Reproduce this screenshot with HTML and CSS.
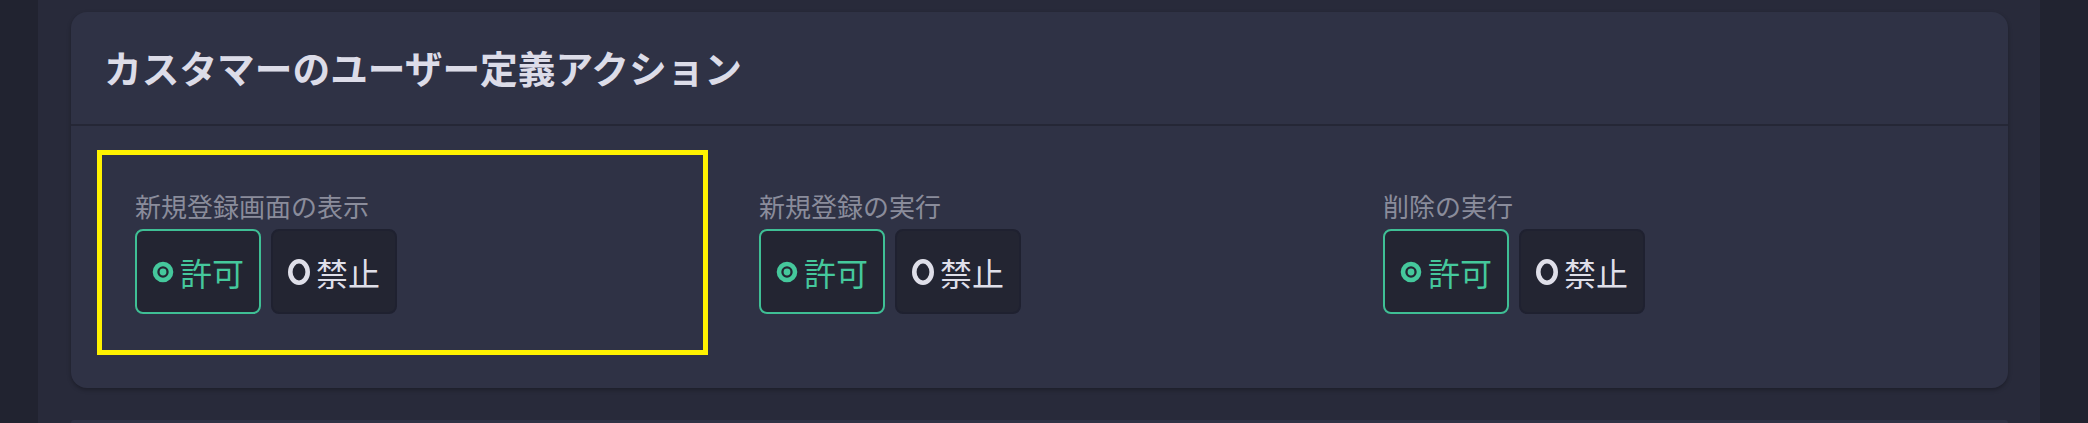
FILE: index.html
```html
<!DOCTYPE html>
<html lang="ja">
<head>
<meta charset="utf-8">
<title>カスタマーのユーザー定義アクション</title>
<link rel="stylesheet" href="styles.css">
</head>
<body>
<div class="app">
  <aside class="rail rail-left"></aside>
  <main class="main">
    <section class="card">
      <header class="card-header">
        <h2 class="card-title">カスタマーのユーザー定義アクション</h2>
      </header>
      <div class="card-body">
        <div class="actions">
          <div class="action action-highlight">
            <div class="action-label">新規登録画面の表示</div>
            <div class="choice-group">
              <button class="choice choice-on"><svg class="radio" viewBox="0 0 22 26"><circle cx="11" cy="13" r="8" fill="none" stroke="currentColor" stroke-width="4.6"/><circle cx="11" cy="13" r="3.4" fill="currentColor"/></svg><span>許可</span></button>
              <button class="choice choice-off"><svg class="radio" viewBox="0 0 22 26"><ellipse cx="11" cy="13" rx="8.7" ry="10.7" fill="none" stroke="currentColor" stroke-width="4.6"/></svg><span>禁止</span></button>
            </div>
          </div>
          <div class="action">
            <div class="action-label">新規登録の実行</div>
            <div class="choice-group">
              <button class="choice choice-on"><svg class="radio" viewBox="0 0 22 26"><circle cx="11" cy="13" r="8" fill="none" stroke="currentColor" stroke-width="4.6"/><circle cx="11" cy="13" r="3.4" fill="currentColor"/></svg><span>許可</span></button>
              <button class="choice choice-off"><svg class="radio" viewBox="0 0 22 26"><ellipse cx="11" cy="13" rx="8.7" ry="10.7" fill="none" stroke="currentColor" stroke-width="4.6"/></svg><span>禁止</span></button>
            </div>
          </div>
          <div class="action">
            <div class="action-label">削除の実行</div>
            <div class="choice-group">
              <button class="choice choice-on"><svg class="radio" viewBox="0 0 22 26"><circle cx="11" cy="13" r="8" fill="none" stroke="currentColor" stroke-width="4.6"/><circle cx="11" cy="13" r="3.4" fill="currentColor"/></svg><span>許可</span></button>
              <button class="choice choice-off"><svg class="radio" viewBox="0 0 22 26"><ellipse cx="11" cy="13" rx="8.7" ry="10.7" fill="none" stroke="currentColor" stroke-width="4.6"/></svg><span>禁止</span></button>
            </div>
          </div>
        </div>
      </div>
    </section>
    <section class="card card-next"></section>
  </main>
  <aside class="rail rail-right"></aside>
</div>
</body>
</html>
```
FILE: styles.css
```css
* { box-sizing: border-box; }
html, body {
  margin: 0;
  height: 100%;
  overflow: hidden;
  background: #282a3a;
  font-family: "Noto Sans CJK JP", "Noto Sans", sans-serif;
}
.app {
  display: flex;
  height: 423px;
  overflow: hidden;
}
.rail {
  background: #212330;
  flex: none;
}
.rail-left { width: 38px; }
.rail-right { width: 48px; }
.main {
  flex: 1;
  padding: 12px 32px 0 33px;
  background: #282a3a;
  overflow: hidden;
}
.card {
  background: #2f3245;
  border-radius: 16px;
  box-shadow: 0 2px 4px rgba(0, 0, 0, 0.28);
}
.card-header {
  height: 114px;
  display: flex;
  align-items: center;
  padding: 0 0 2px 33px;
  border-bottom: 2px solid #252736;
}
.card-title {
  margin: 0;
  font-size: 37.7px;
  font-weight: 700;
  color: #dcdce8;
  line-height: 1.2;
}
.card-body {
  padding: 24px 0 33px 26px;
}
.actions {
  display: grid;
  grid-template-columns: repeat(3, 611px);
  column-gap: 13px;
}
.action {
  border: 5px solid transparent;
  padding: 33px 33px 36px;
}
.action-highlight {
  border-color: #fff200;
}
.action-label {
  font-size: 26px;
  line-height: 36px;
  color: #8a8c9b;
  margin-bottom: 5px;
}
.choice-group {
  display: flex;
  gap: 10px;
}
.choice {
  width: 126px;
  height: 85px;
  display: flex;
  align-items: center;
  justify-content: center;
  gap: 6px;
  padding: 0;
  border-radius: 8px;
  background: #232532;
  font-family: "Noto Sans CJK JP", "Noto Sans", sans-serif;
  font-size: 32px;
  line-height: 1;
  cursor: pointer;
}
.choice-on {
  border: 2px solid #3fbf95;
  color: #45c89c;
}
.choice-off {
  border: 2px solid #1f2130;
  color: #dfdfe9;
}
.radio {
  width: 22px;
  height: 26px;
  flex: none;
}
.card-next {
  margin-top: 32px;
  height: 3px;
  border-radius: 16px 16px 0 0;
  box-shadow: none;
}
```
